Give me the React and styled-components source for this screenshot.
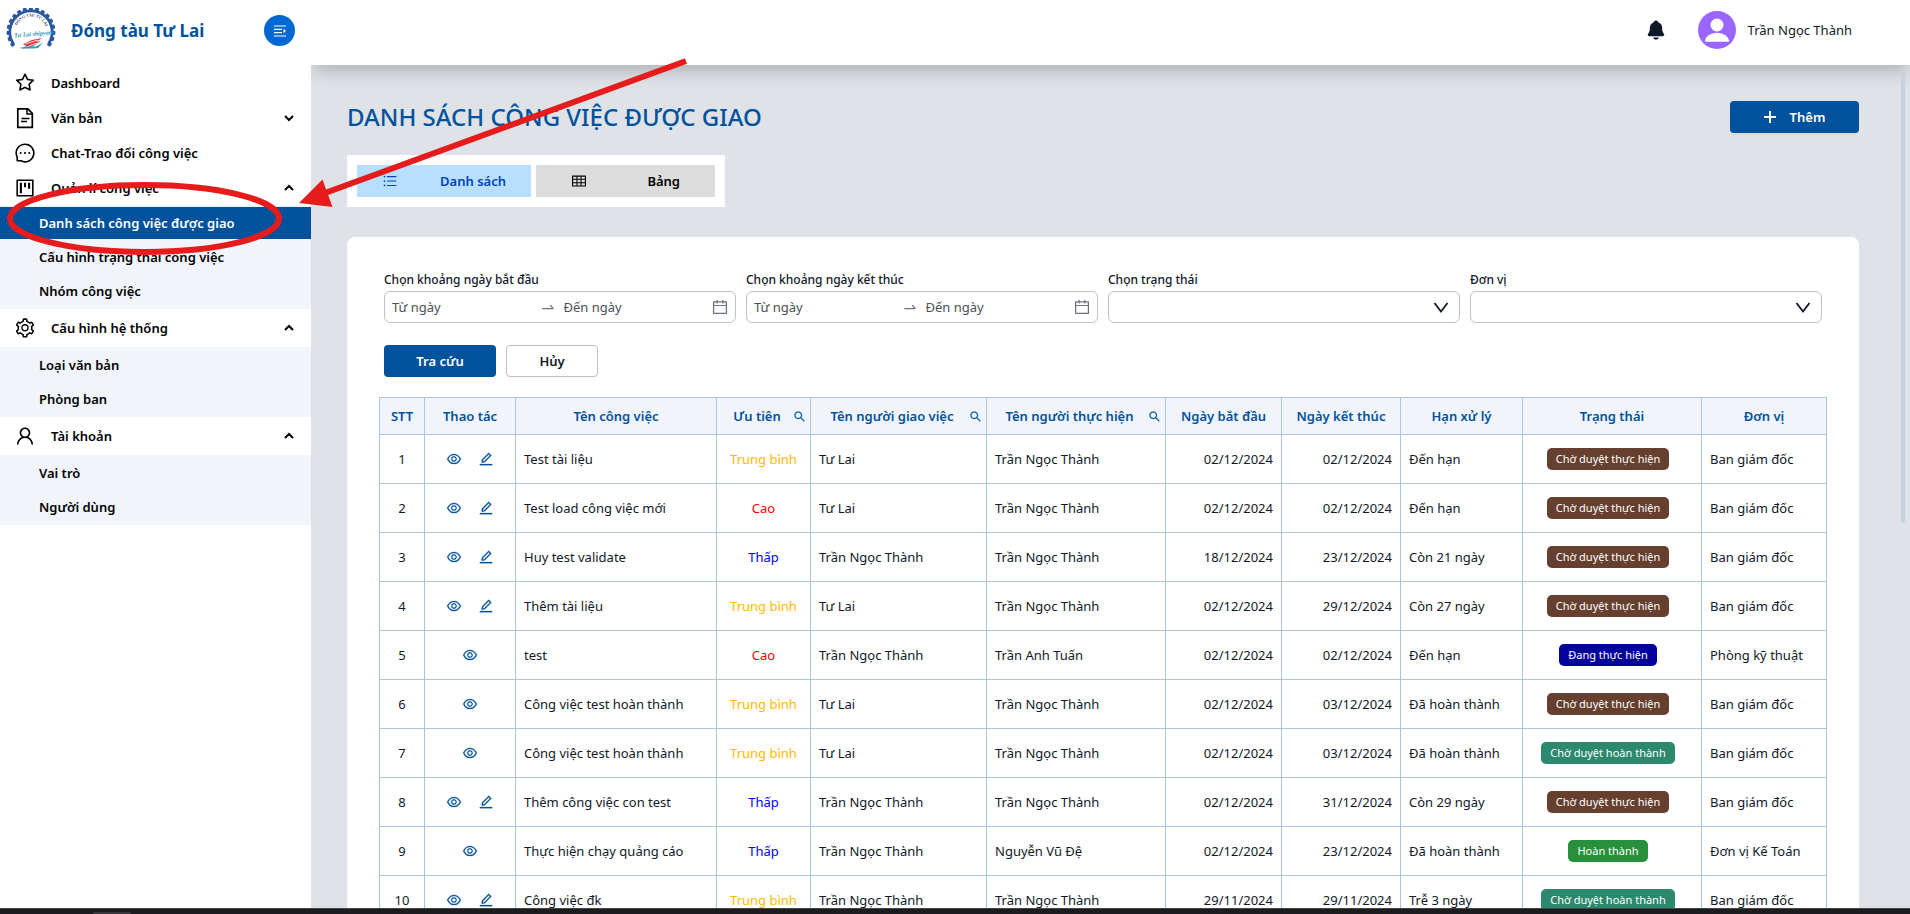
import React, { useState } from "react";
import styled, { createGlobalStyle, css } from "styled-components";
import {
  AiOutlineStar,
  AiOutlineMessage,
  AiOutlineProject,
  AiOutlineSetting,
  AiOutlineUser,
  AiOutlineUnorderedList,
  AiOutlineTable,
  AiOutlineCalendar,
  AiOutlineSwapRight,
  AiOutlineSearch,
  AiOutlineEye,
  AiOutlineEdit,
} from "react-icons/ai";
import { IoNotifications } from "react-icons/io5";

const colors = {
  primary: "#00529c",
  text: "#111827",
  pageBg: "#dfe2e7",
  soft: "#f1f5fb",
  line: "#a9c6de",
  field: "#bfc0c8",
};

const FileIcon = () => (
  <svg viewBox="0 0 22 22" fill="none" stroke="currentColor">
    <path d="M3.8 1.8h10l4.500 4.500v14H3.800z" strokeWidth="1.700" />
    <path d="M13 2v5h5" strokeWidth="1.500" />
    <path d="M7.500 11.500h8M7 14.500h6" strokeWidth="1.500" />
  </svg>
);

const Chevron = ({ up }) => (
  <svg viewBox="0 0 10 8" width="10" height="8" fill="none" stroke="#000" strokeWidth="2">
    <path d={up ? "M1 6l4-4 4 4" : "M1 2l4 4 4-4"} />
  </svg>
);

const CollapseIcon = () => (
  <svg viewBox="0 0 14 12" width="14" height="12" fill="none" stroke="#fff" strokeWidth="1.200">
    <path d="M1 1h12M1 4.300h8M1 7.600h8M1 11h12" />
    <path d="M10.500 3.800l2.500 2.200-2.500 2.200z" fill="#fff" stroke="none" />
  </svg>
);

const PlusIcon = () => (
  <svg viewBox="0 0 12 12" width="12" height="12" stroke="#fff" strokeWidth="2">
    <path d="M6 0v12M0 6h12" />
  </svg>
);

const teeth = Array.from({ length: 17 }, (_, i) => 145 + i * 15.6);

const Logo = () => (
  <svg viewBox="0 0 50 46" width="50" height="46" role="img" aria-label="Tư Lai shipyard">
    <path d="M7.500 36A21.200 21.200 0 1 1 42.500 36" fill="none" stroke="#2a57a0" strokeWidth="2.800" />
    {teeth.map((a) => (
      <rect
        key={a}
        x="45.500"
        y="21.500"
        width="3.900"
        height="4"
        rx="0.800"
        fill="#2a57a0"
        transform={`rotate(${a} 25 23.500)`}
      />
    ))}
    <path id="logoArc" d="M10.500 18.500A15.500 15.500 0 0 1 39.500 18.500" fill="none" />
    <text fontSize="4" fontWeight="700" fontFamily="Liberation Serif, serif" fill="#33415f">
      <textPath href="#logoArc" startOffset="1">
        ĐÓNG TÀU TƯ LAI
      </textPath>
    </text>
    <text
      x="8"
      y="28"
      fontSize="6"
      fontStyle="italic"
      fontWeight="700"
      fontFamily="Liberation Serif, serif"
      fill="#2b8fb8"
      transform="rotate(-5 25 27)"
    >
      Tư Lai shipyard
    </text>
    <path d="M17 36l9-4 10-2-6 4 5-1-8 5-11 3 4-3z" fill="#d8343c" />
    <path d="M19 36l13-4M20 39l11-4" stroke="#fff" strokeWidth="0.800" />
    <path d="M13 40q10-2.500 17-1.500l7-4-5 5.500q-9 1-19 0z" fill="#2b9cc4" />
  </svg>
);

const Avatar = () => (
  <svg viewBox="0 0 38 38" width="38" height="38" aria-hidden="true">
    <circle cx="19" cy="19" r="19" fill="#9966ff" />
    <circle cx="19" cy="14" r="6.500" fill="#fff" />
    <path d="M7 30.700a12 9 0 0 1 24 0z" fill="#fff" />
  </svg>
);

const SelectArrow = () => (
  <svg viewBox="0 0 16 12" width="16" height="12" fill="none" stroke={colors.text} strokeWidth="1.800">
    <path d="M1.500 2l6.500 8.500 6.500-8.500" />
  </svg>
);

const menu = [
  { label: "Dashboard", icon: <AiOutlineStar /> },
  { label: "Văn bản", icon: <FileIcon />, children: [] },
  { label: "Chat-Trao đổi công việc", icon: <AiOutlineMessage /> },
  {
    label: "Quản lí công việc",
    icon: <AiOutlineProject />,
    children: ["Danh sách công việc được giao", "Cấu hình trạng thái công việc", "Nhóm công việc"],
  },
  {
    label: "Cấu hình hệ thống",
    icon: <AiOutlineSetting />,
    tall: true,
    children: ["Loại văn bản", "Phòng ban"],
  },
  { label: "Tài khoản", icon: <AiOutlineUser />, tall: true, children: ["Vai trò", "Người dùng"] },
];

const columns = [
  { title: "STT", width: 45 },
  { title: "Thao tác", width: 91 },
  { title: "Tên công việc", width: 201 },
  { title: "Ưu tiên", width: 94, search: true },
  { title: "Tên người giao việc", width: 176, search: true },
  { title: "Tên người thực hiện", width: 179, search: true },
  { title: "Ngày bắt đầu", width: 116 },
  { title: "Ngày kết thúc", width: 119 },
  { title: "Hạn xử lý", width: 122 },
  { title: "Trạng thái", width: 179 },
  { title: "Đơn vị", width: 125 },
];

const priorityColors = { "Trung bình": "#ffb800", Cao: "#ff0000", "Thấp": "#0000ff" };

const statusColors = {
  "Chờ duyệt thực hiện": "#663f2e",
  "Đang thực hiện": "#03039c",
  "Chờ duyệt hoàn thành": "#2c896d",
  "Hoàn thành": "#28903a",
};

const rows = [
  ["Test tài liệu", "Trung bình", "Tư Lai", "Trần Ngọc Thành", "02/12/2024", "02/12/2024", "Đến hạn", "Chờ duyệt thực hiện", "Ban giám đốc", true],
  ["Test load công việc mới", "Cao", "Tư Lai", "Trần Ngọc Thành", "02/12/2024", "02/12/2024", "Đến hạn", "Chờ duyệt thực hiện", "Ban giám đốc", true],
  ["Huy test validate", "Thấp", "Trần Ngọc Thành", "Trần Ngọc Thành", "18/12/2024", "23/12/2024", "Còn 21 ngày", "Chờ duyệt thực hiện", "Ban giám đốc", true],
  ["Thêm tài liệu", "Trung bình", "Tư Lai", "Trần Ngọc Thành", "02/12/2024", "29/12/2024", "Còn 27 ngày", "Chờ duyệt thực hiện", "Ban giám đốc", true],
  ["test", "Cao", "Trần Ngọc Thành", "Trần Anh Tuấn", "02/12/2024", "02/12/2024", "Đến hạn", "Đang thực hiện", "Phòng kỹ thuật", false],
  ["Công việc test hoàn thành", "Trung bình", "Tư Lai", "Trần Ngọc Thành", "02/12/2024", "03/12/2024", "Đã hoàn thành", "Chờ duyệt thực hiện", "Ban giám đốc", false],
  ["Công việc test hoàn thành", "Trung bình", "Tư Lai", "Trần Ngọc Thành", "02/12/2024", "03/12/2024", "Đã hoàn thành", "Chờ duyệt hoàn thành", "Ban giám đốc", false],
  ["Thêm công việc con test", "Thấp", "Trần Ngọc Thành", "Trần Ngọc Thành", "02/12/2024", "31/12/2024", "Còn 29 ngày", "Chờ duyệt thực hiện", "Ban giám đốc", true],
  ["Thực hiện chạy quảng cáo", "Thấp", "Trần Ngọc Thành", "Nguyễn Vũ Đệ", "02/12/2024", "23/12/2024", "Đã hoàn thành", "Hoàn thành", "Đơn vị Kế Toán", false],
  ["Công việc đk", "Trung bình", "Trần Ngọc Thành", "Trần Ngọc Thành", "29/11/2024", "29/11/2024", "Trễ 3 ngày", "Chờ duyệt hoàn thành", "Ban giám đốc", true],
];

const DateRange = ({ id, label }) => (
  <Field>
    <FieldLabel htmlFor={id}>{label}</FieldLabel>
    <RangeBox>
      <RangeInput id={id} placeholder="Từ ngày" />
      <AiOutlineSwapRight size={16} />
      <RangeInput aria-label={`${label} - Đến ngày`} placeholder="Đến ngày" />
      <AiOutlineCalendar size={18} />
    </RangeBox>
  </Field>
);

const SelectField = ({ id, label }) => (
  <Field>
    <FieldLabel htmlFor={id}>{label}</FieldLabel>
    <SelectBox>
      <Select id={id} defaultValue="">
        <option value="" />
      </Select>
      <SelectArrow />
    </SelectBox>
  </Field>
);

const App = () => {
  const [active, setActive] = useState("Danh sách công việc được giao");
  const [view, setView] = useState("list");

  return (
    <>
      <GlobalStyle />
      <Shell>
        <Workspace>
          <Sidebar>
            <Brand>
              <Logo />
              <BrandName>Đóng tàu Tư Lai</BrandName>
              <CollapseButton aria-label="Thu gọn menu">
                <CollapseIcon />
              </CollapseButton>
            </Brand>
            <nav>
              {menu.map(({ label, icon, children, tall }) => (
                <React.Fragment key={label}>
                  <MenuItem href="#" $tall={tall}>
                    {icon}
                    <span>{label}</span>
                    {children && <Chevron up={children.length > 0} />}
                  </MenuItem>
                  {children && children.length > 0 && (
                    <SubMenu>
                      {children.map((name) => (
                        <SubItem
                          key={name}
                          href="#"
                          $active={name === active}
                          onClick={() => setActive(name)}
                        >
                          {name}
                        </SubItem>
                      ))}
                    </SubMenu>
                  )}
                </React.Fragment>
              ))}
            </nav>
          </Sidebar>

          <Content>
            <Header>
              <BellButton aria-label="Thông báo">
                <IoNotifications size={22} />
              </BellButton>
              <Avatar />
              <UserName>Trần Ngọc Thành</UserName>
            </Header>

            <Page>
              <TitleRow>
                <Title>DANH SÁCH CÔNG VIỆC ĐƯỢC GIAO</Title>
                <AddButton>
                  <PlusIcon />
                  Thêm
                </AddButton>
              </TitleRow>

              <ViewTabs>
                <ViewTab $active={view === "list"} onClick={() => setView("list")}>
                  <AiOutlineUnorderedList size={16} />
                  <span>Danh sách</span>
                </ViewTab>
                <ViewTab $wide $active={view === "board"} onClick={() => setView("board")}>
                  <AiOutlineTable size={16} />
                  <span>Bảng</span>
                </ViewTab>
              </ViewTabs>

              <Card>
                <Filters>
                  <DateRange id="start" label="Chọn khoảng ngày bắt đầu" />
                  <DateRange id="end" label="Chọn khoảng ngày kết thúc" />
                  <SelectField id="status" label="Chọn trạng thái" />
                  <SelectField id="unit" label="Đơn vị" />
                </Filters>
                <Actions>
                  <SearchButton>Tra cứu</SearchButton>
                  <CancelButton>Hủy</CancelButton>
                </Actions>

                <Table>
                  <colgroup>
                    {columns.map(({ title, width }) => (
                      <col key={title} width={width} />
                    ))}
                  </colgroup>
                  <thead>
                    <tr>
                      {columns.map(({ title, search }) => (
                        <Th key={title}>
                          <ThInner>
                            <span>{title}</span>
                            {search && (
                              <IconButton aria-label={`Tìm ${title}`}>
                                <AiOutlineSearch size={13} />
                              </IconButton>
                            )}
                          </ThInner>
                        </Th>
                      ))}
                    </tr>
                  </thead>
                  <tbody>
                    {rows.map(([name, priority, from, to, start, end, due, status, unit, editable], i) => (
                      <tr key={i}>
                        <Td $align="center">{i + 1}</Td>
                        <Td>
                          <RowActions>
                            <IconButton aria-label="Xem">
                              <AiOutlineEye size={16} />
                            </IconButton>
                            {editable && (
                              <IconButton aria-label="Sửa">
                                <AiOutlineEdit size={16} />
                              </IconButton>
                            )}
                          </RowActions>
                        </Td>
                        <Td>{name}</Td>
                        <Td $align="center" $color={priorityColors[priority]}>
                          {priority}
                        </Td>
                        <Td>{from}</Td>
                        <Td>{to}</Td>
                        <Td $align="right">{start}</Td>
                        <Td $align="right">{end}</Td>
                        <Td>{due}</Td>
                        <Td $align="center">
                          <Status $color={statusColors[status]}>{status}</Status>
                        </Td>
                        <Td>{unit}</Td>
                      </tr>
                    ))}
                  </tbody>
                </Table>
              </Card>
            </Page>
            <ScrollThumb />
          </Content>
        </Workspace>
        <Taskbar>
          <TaskbarTab />
        </Taskbar>
        <Marker viewBox="0 0 700 270" width="700" height="270" aria-hidden="true">
          <ellipse cx="144.500" cy="218.500" rx="134.500" ry="33.500" fill="none" stroke="#e61c1c" strokeWidth="6" />
          <path d="M686 61L325 193" stroke="#e61c1c" strokeWidth="6" />
          <path d="M299 203l23.500-23.500 10 27.500z" fill="#e61c1c" />
        </Marker>
      </Shell>
    </>
  );
};

export default App;

const GlobalStyle = createGlobalStyle`
  * {
    box-sizing: border-box;
  }
  body {
    margin: 0;
    background: ${colors.pageBg};
    color: ${colors.text};
    font: 13px/20px "Noto Sans", "Open Sans", sans-serif;
  }
  button, input, select {
    font: inherit;
    color: inherit;
  }
  button {
    cursor: pointer;
  }
  a {
    color: inherit;
    text-decoration: none;
  }
  svg {
    flex-shrink: 0;
  }
`;

const Shell = styled.div`
  position: relative;
  height: 100vh;
  display: flex;
  flex-direction: column;
  overflow: hidden;
`;

const Workspace = styled.div`
  flex: 1;
  min-height: 0;
  display: flex;
`;

const Sidebar = styled.aside`
  width: 311px;
  flex-shrink: 0;
  background: #fff;
  color: #000;
  font-weight: 600;
`;

const Brand = styled.div`
  height: 65px;
  padding: 0 16px 4px 6px;
  display: flex;
  align-items: center;
`;

const BrandName = styled.strong`
  flex: 1;
  margin-left: 15px;
  color: ${colors.primary};
  font-size: 17px;
  font-weight: 700;
`;

const CollapseButton = styled.button`
  width: 31px;
  height: 31px;
  padding: 0;
  border: none;
  border-radius: 50%;
  display: flex;
  align-items: center;
  justify-content: center;
  background: #0068d2;
  color: #fff;
`;

const MenuItem = styled.a`
  height: ${({ $tall }) => ($tall ? 38 : 35)}px;
  padding: 0 17px 0 14px;
  display: flex;
  align-items: center;
  gap: 15px;

  span {
    flex: 1;
  }
  > svg:first-child {
    width: 22px;
    height: 22px;
  }
`;

const SubMenu = styled.div`
  padding: 2px 0;
  display: flex;
  flex-direction: column;
  gap: 2px;
  background: ${colors.soft};
`;

const SubItem = styled.a`
  height: 32px;
  padding-left: 39px;
  display: flex;
  align-items: center;
  ${({ $active }) =>
    $active &&
    css`
      background: ${colors.primary};
      color: #fff;
    `};
`;

const Content = styled.main`
  position: relative;
  flex: 1;
  min-width: 0;
  overflow: hidden;
`;

const Header = styled.header`
  position: relative;
  height: 65px;
  padding: 0 58px 5px 0;
  display: flex;
  align-items: center;
  justify-content: flex-end;
  background: #fff;
  box-shadow: 0 10px 15px -3px rgba(0, 0, 0, 0.2);
`;

const BellButton = styled.button`
  margin-right: 31px;
  padding: 0;
  border: none;
  display: flex;
  background: transparent;
`;

const UserName = styled.span`
  margin-left: 12px;
`;

const Page = styled.div`
  padding: 36px 51px 0 36px;
`;

const TitleRow = styled.div`
  display: flex;
  justify-content: space-between;
  align-items: center;
`;

const Title = styled.h1`
  margin: 0;
  color: ${colors.primary};
  font-size: 24px;
  line-height: 32px;
  font-weight: 500;
`;

const Button = styled.button`
  height: 32px;
  border-radius: 4px;
  font-weight: 600;
  box-shadow: 0 2px 0 rgba(0, 0, 0, 0.02);
`;

const PrimaryButton = styled(Button)`
  border: none;
  background: ${colors.primary};
  color: #fff;
`;

const AddButton = styled(PrimaryButton)`
  width: 129px;
  display: flex;
  align-items: center;
  justify-content: center;
  gap: 14px;
`;

const SearchButton = styled(PrimaryButton)`
  width: 112px;
`;

const CancelButton = styled(Button)`
  width: 92px;
  border: 1px solid ${colors.field};
  background: #fff;
`;

const ViewTabs = styled.div`
  width: fit-content;
  margin: 22px 0 30px;
  padding: 10px;
  display: flex;
  gap: 5px;
  background: #fff;
`;

const ViewTab = styled.button`
  width: ${({ $wide }) => ($wide ? 179 : 174)}px;
  height: 32px;
  padding: 0 ${({ $wide }) => ($wide ? 35 : 25)}px;
  border: none;
  display: flex;
  align-items: center;
  justify-content: space-between;
  font-weight: 600;
  background: ${({ $active }) => ($active ? "#b8dfff" : "#dcdcdc")};
  color: ${({ $active }) => ($active ? "#0044b8" : "#000")};
`;

const Card = styled.section`
  padding: 32px;
  border-radius: 8px 8px 0 0;
  background: #fff;
`;

const Filters = styled.div`
  padding: 0 5px;
  display: grid;
  grid-template-columns: repeat(4, 1fr);
  gap: 10px;
`;

const Field = styled.div`
  min-width: 0;
`;

const FieldLabel = styled.label`
  display: block;
  height: 22px;
  line-height: 22px;
  font-size: 12px;
  font-weight: 500;
`;

const RangeBox = styled.div`
  height: 32px;
  padding: 0 6px 0 7px;
  border: 1px solid ${colors.field};
  border-radius: 6px;
  display: flex;
  align-items: center;
  gap: 8px;
  color: #6b7280;
`;

const RangeInput = styled.input`
  flex: 1;
  min-width: 0;
  padding: 0;
  border: none;
  outline: none;
  background: transparent;

  &::placeholder {
    color: #4b4f58;
    opacity: 1;
  }
`;

const SelectBox = styled.div`
  display: grid;
  align-items: center;

  > * {
    grid-area: 1 / 1;
  }
  svg {
    justify-self: end;
    margin-right: 11px;
    pointer-events: none;
  }
`;

const Select = styled.select`
  width: 100%;
  height: 32px;
  padding: 0 34px 0 8px;
  border: 1px solid ${colors.field};
  border-radius: 6px;
  appearance: none;
  background: #fff;
`;

const Actions = styled.div`
  margin: 22px 5px 20px;
  display: flex;
  gap: 10px;
`;

const Table = styled.table`
  width: 100%;
  table-layout: fixed;
  border-collapse: collapse;
`;

const Th = styled.th`
  height: 37px;
  padding: 0 4px;
  border: 1px solid ${colors.line};
  background: ${colors.soft};
  color: ${colors.primary};
  font-weight: 600;
  white-space: nowrap;
`;

const ThInner = styled.div`
  display: flex;
  align-items: center;

  span {
    flex: 1;
  }
`;

const Td = styled.td`
  height: 49px;
  padding: 0 8px;
  border: 1px solid ${colors.line};
  text-align: ${({ $align }) => $align || "left"};
  color: ${({ $color }) => $color || "inherit"};
  white-space: nowrap;
`;

const RowActions = styled.div`
  display: flex;
  justify-content: center;
  gap: 16px;
`;

const IconButton = styled.button`
  padding: 0;
  border: none;
  display: flex;
  background: transparent;
  color: ${colors.primary};

  svg {
    stroke: currentColor;
    stroke-width: 16px;
  }
`;

const Status = styled.span`
  margin-right: 8px;
  padding: 0 9px;
  border-radius: 5px;
  display: inline-block;
  font-size: 11px;
  line-height: 22px;
  vertical-align: middle;
  background: ${({ $color }) => $color};
  color: #fff;
`;

const ScrollThumb = styled.div`
  position: absolute;
  top: 71px;
  right: 5px;
  width: 4px;
  height: 452px;
  border-radius: 2px;
  background: #c3d3e2;
`;

const Taskbar = styled.footer`
  height: 6px;
  padding-left: 93px;
  border-top: 1px solid #454547;
  background: #1c1c1e;
`;

const TaskbarTab = styled.div`
  width: 38px;
  height: 2px;
  margin-top: 3px;
  border-radius: 2px 2px 0 0;
  background: #39393b;
`;

const Marker = styled.svg`
  position: absolute;
  top: 0;
  left: 0;
  pointer-events: none;
`;
